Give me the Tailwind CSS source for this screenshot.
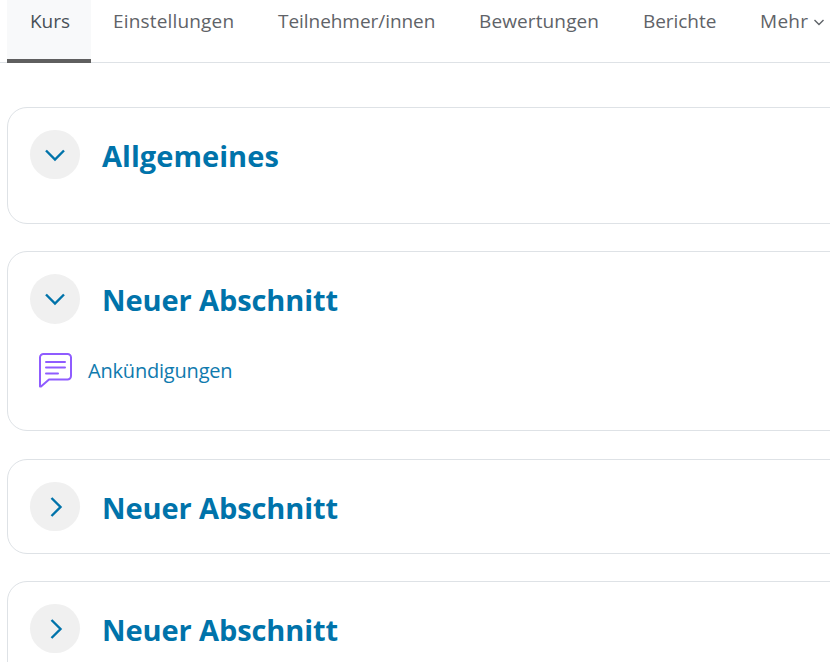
<!DOCTYPE html>
<html lang="de">
<head>
  <meta charset="UTF-8">
  <title>Kurs</title>
  <script src="https://cdn.jsdelivr.net/npm/@tailwindcss/browser@4"></script>
</head>
<body class="bg-white h-[662px] w-[830px] overflow-hidden font-['Open_Sans',sans-serif]">
  <!-- tabs -->
  <nav class="flex h-[63px] pl-[7px] border-b border-[#dee2e6] text-[19px] tracking-[-0.05px] text-[#5f6368] leading-[42px]">
    <a class="w-[84px] h-[63px] pl-[23px] bg-[#f8f9fa] border-b-4 border-[#5f5f5f] text-[#495057]">Kurs</a>
    <a class="w-[165px] h-[62px] pl-[22px] tracking-[0.17px]">Einstellungen</a>
    <a class="w-[201px] h-[62px] pl-[22px]">Teilnehmer/innen</a>
    <a class="w-[164px] h-[62px] pl-[22px] tracking-[0.12px]">Bewertungen</a>
    <a class="w-[117px] h-[62px] pl-[22px]">Berichte</a>
    <a class="flex items-center h-[42px] pl-[22px] gap-[5px] whitespace-nowrap tracking-[0.3px]">Mehr
      <svg class="w-[12px] h-[12px] mt-[1px]" viewBox="0 0 12 12" fill="none" stroke="#5f6368" stroke-width="1.4"><path d="M1.500 4l4.500 4.500L10.500 4"/></svg>
    </a>
  </nav>

  <main class="w-[900px] ml-[7px] pt-[44px] flex flex-col">
    <section class="h-[117px] mb-[27px] border border-[#dee2e6] rounded-[20px] pl-[22px] pt-[22px]">
      <div class="flex items-center">
        <span class="w-[50px] h-[49px] rounded-full bg-[#f0f0f0] flex items-center justify-center">
          <svg class="w-[20px] h-[20px]" viewBox="0 0 20 20" fill="none" stroke="#0073aa" stroke-width="2.4"><path d="M1 5.500l9 9 9-9"/></svg>
        </span>
        <h3 class="ml-[22px] mt-[3px] text-[29px] font-bold text-[#0073aa] tracking-[0.05px]">Allgemeines</h3>
      </div>
    </section>

    <section class="h-[180px] mb-[28px] border border-[#dee2e6] rounded-[20px] pl-[22px] pt-[22px]">
      <div class="flex items-center">
        <span class="w-[50px] h-[50px] rounded-full bg-[#f0f0f0] flex items-center justify-center">
          <svg class="w-[20px] h-[20px]" viewBox="0 0 20 20" fill="none" stroke="#0073aa" stroke-width="2.4"><path d="M1 5.500l9 9 9-9"/></svg>
        </span>
        <h3 class="ml-[22px] mt-[2px] text-[29px] font-bold text-[#0073aa] tracking-[-0.1px]">Neuer Abschnitt</h3>
      </div>
      <div class="flex items-center mt-[28px] ml-[8px]">
        <svg class="w-[36px] h-[36px]" viewBox="0 0 36 36" fill="none" stroke="#8f5cff" stroke-width="2" stroke-linecap="round" stroke-linejoin="round">
          <path d="M2 5.500a3.500 3.500 0 0 1 3.500-3.500h24a3.500 3.500 0 0 1 3.500 3.500v18.500a3.500 3.500 0 0 1-3.500 3.500H11L3 34.500H2z"/>
          <path d="M8 10h19M8 15.500h19M8 21.500h12"/>
        </svg>
        <a class="ml-[14px] mt-[2px] text-[20px] text-[#0f7aae] tracking-[-0.2px]">Ankündigungen</a>
      </div>
    </section>

    <section class="h-[95px] mb-[27px] border border-[#dee2e6] rounded-[20px] pl-[22px] pt-[22px]">
      <div class="flex items-center">
        <span class="w-[50px] h-[49px] rounded-full bg-[#f0f0f0] flex items-center justify-center">
          <svg class="w-[20px] h-[20px] ml-[2px]" viewBox="0 0 20 20" fill="none" stroke="#0073aa" stroke-width="2.4"><path d="M5.500 1l9 9-9 9"/></svg>
        </span>
        <h3 class="ml-[22px] mt-[3px] text-[29px] font-bold text-[#0073aa] tracking-[-0.1px]">Neuer Abschnitt</h3>
      </div>
    </section>

    <section class="h-[120px] border border-[#dee2e6] rounded-[20px] pl-[22px] pt-[22px]">
      <div class="flex items-center">
        <span class="w-[50px] h-[49px] rounded-full bg-[#f0f0f0] flex items-center justify-center">
          <svg class="w-[20px] h-[20px] ml-[2px]" viewBox="0 0 20 20" fill="none" stroke="#0073aa" stroke-width="2.4"><path d="M5.500 1l9 9-9 9"/></svg>
        </span>
        <h3 class="ml-[22px] mt-[3px] text-[29px] font-bold text-[#0073aa] tracking-[-0.1px]">Neuer Abschnitt</h3>
      </div>
    </section>
  </main>
</body>
</html>
